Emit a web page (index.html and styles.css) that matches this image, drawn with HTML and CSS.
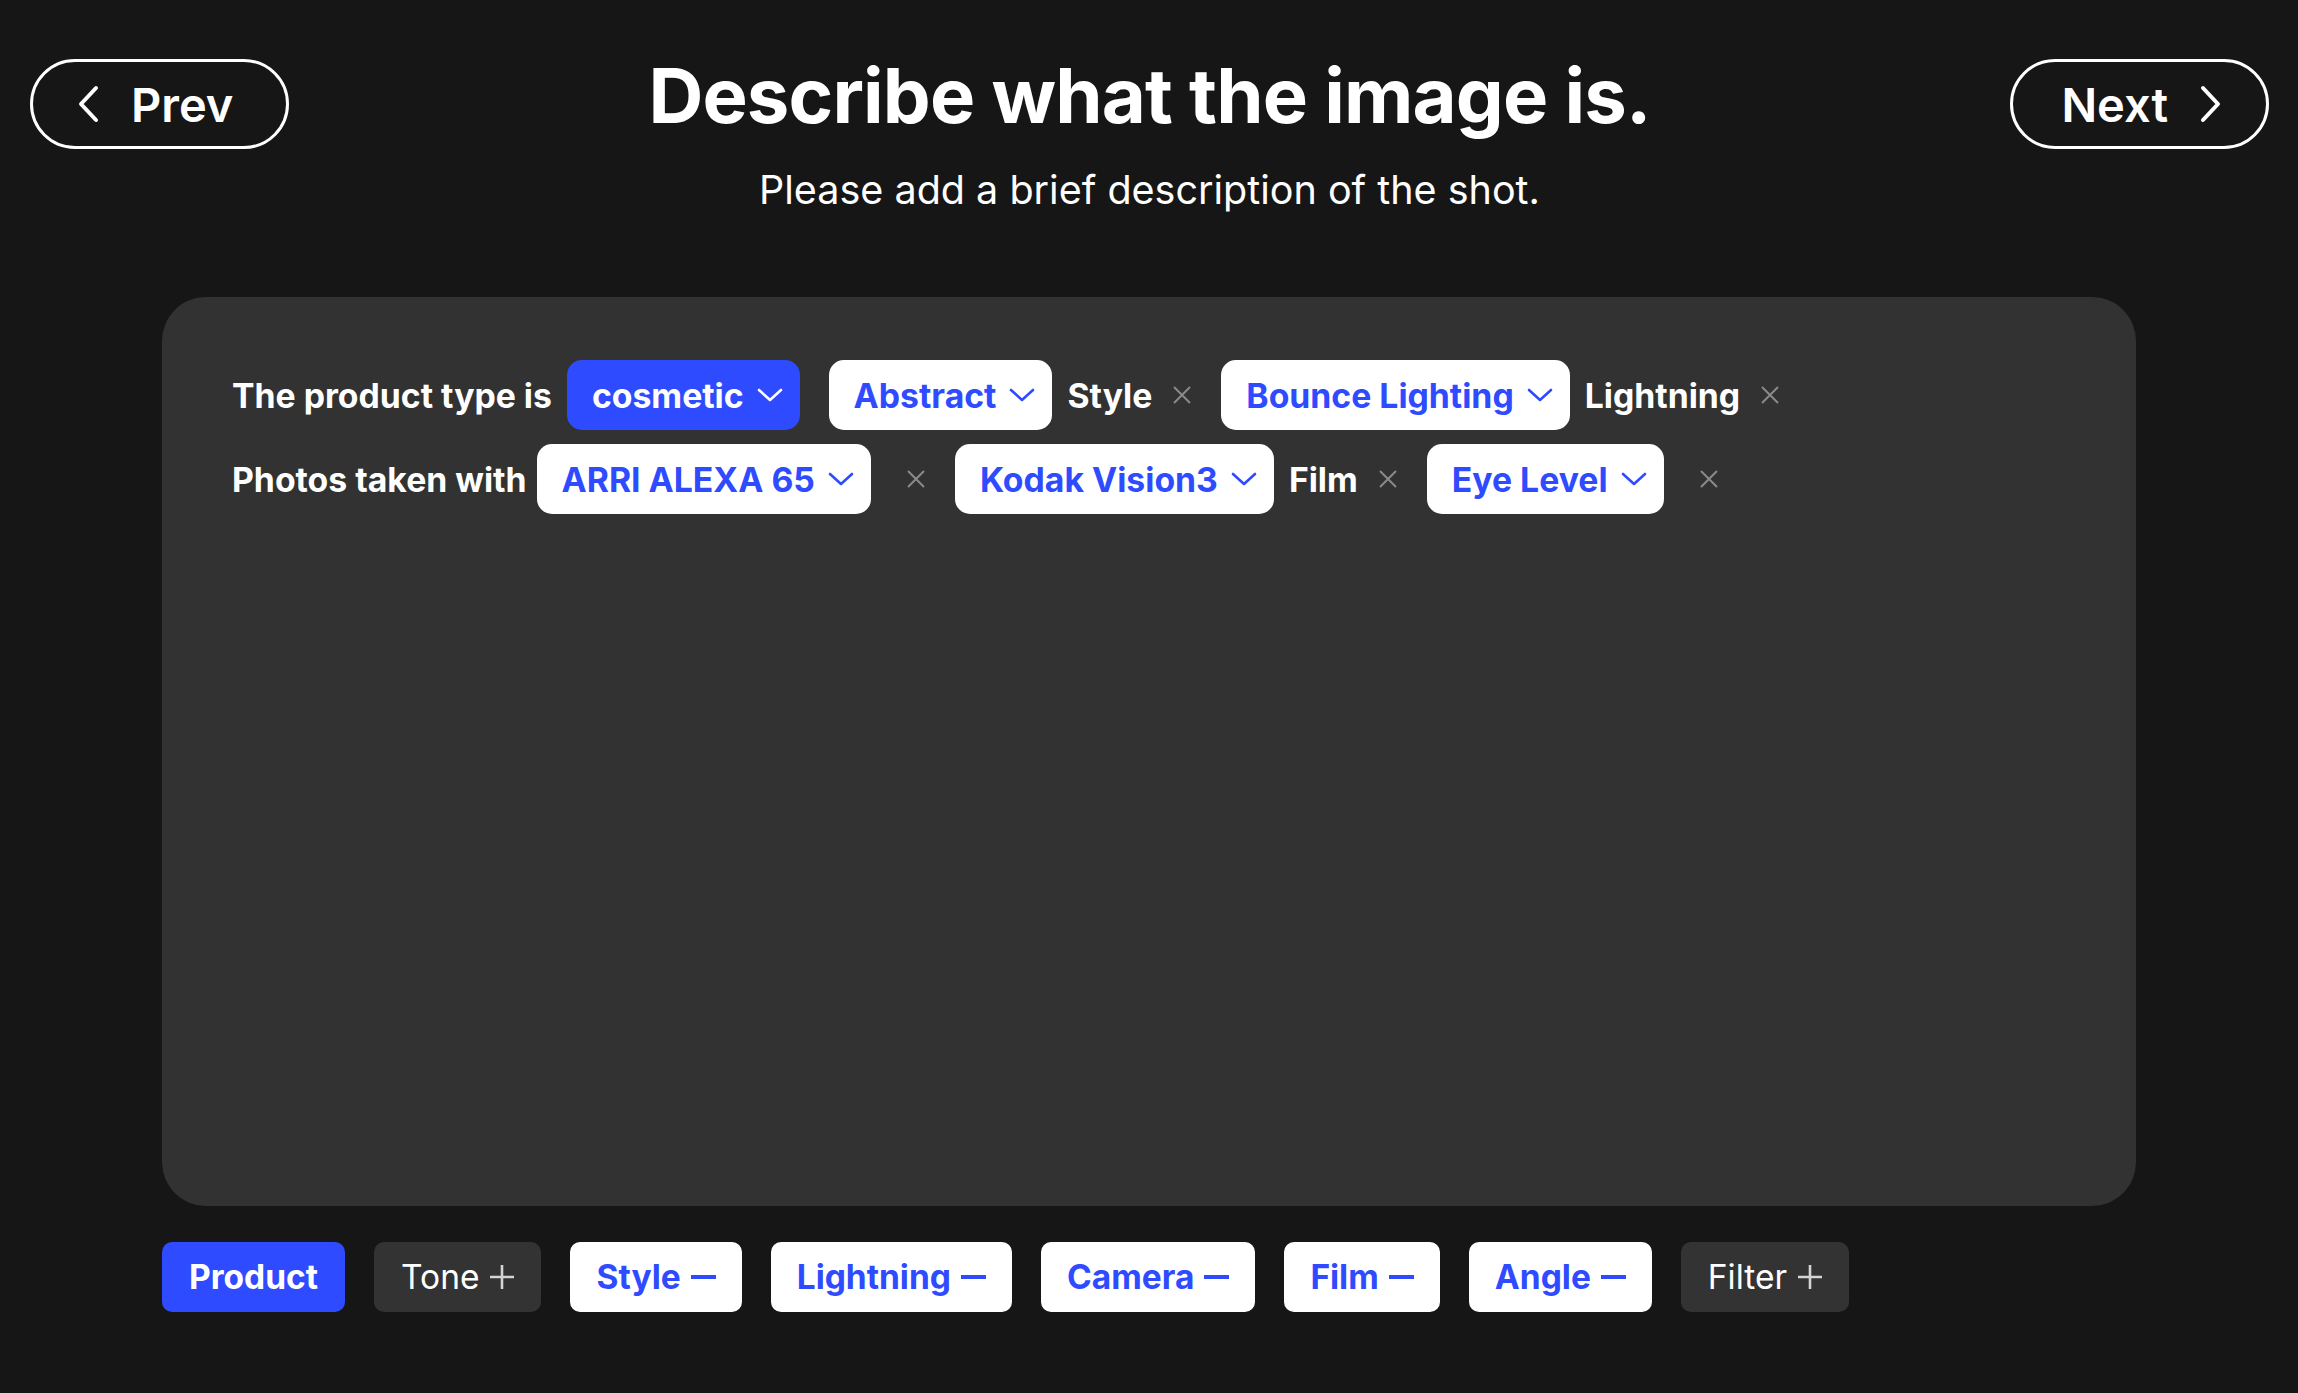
FILE: index.html
```html
<!DOCTYPE html>
<html lang="en">
<head>
    <meta charset="UTF-8">
    <meta name="viewport" content="width=device-width, initial-scale=1.0">
    <title>Describe the image</title>
    <link rel="stylesheet" href="styles.css">
</head>
<body>
    <div class="header">
        <button class="nav-btn nav-prev">
            <svg width="22" height="40" viewBox="0 0 22 40"><path d="M19 4 L4 20 L19 36" fill="none" stroke="#fff" stroke-width="4" stroke-linecap="round" stroke-linejoin="round"/></svg>
            <span>Prev</span>
        </button>

        <div class="heading">
            <h1>Describe what the image is.</h1>
            <p>Please add a brief description of the shot.</p>
        </div>

        <button class="nav-btn nav-next">
            <span>Next</span>
            <svg width="22" height="40" viewBox="0 0 22 40"><path d="M3 4 L18 20 L3 36" fill="none" stroke="#fff" stroke-width="4" stroke-linecap="round" stroke-linejoin="round"/></svg>
        </button>
    </div>

    <!-- Prompt builder -->
    <div class="panel">
        <div class="prompt">
            <div class="segment">
                <span class="label">The product type is</span>
                <button class="pick pick-active">cosmetic
                    <svg width="26" height="14" viewBox="0 0 26 14"><path d="M2 2 L13 12 L24 2" fill="none" stroke="currentColor" stroke-width="2.6" stroke-linecap="round" stroke-linejoin="round"/></svg>
                </button>
            </div>
            <div class="segment">
                <button class="pick">Abstract
                    <svg width="26" height="14" viewBox="0 0 26 14"><path d="M2 2 L13 12 L24 2" fill="none" stroke="currentColor" stroke-width="2.6" stroke-linecap="round" stroke-linejoin="round"/></svg>
                </button>
                <span class="label">Style</span>
                <span class="remove"><svg width="20" height="20" viewBox="0 0 20 20"><path d="M2 2 L18 18 M18 2 L2 18" stroke="#8a8a8a" stroke-width="2"/></svg></span>
            </div>
            <div class="segment">
                <button class="pick">Bounce Lighting
                    <svg width="26" height="14" viewBox="0 0 26 14"><path d="M2 2 L13 12 L24 2" fill="none" stroke="currentColor" stroke-width="2.6" stroke-linecap="round" stroke-linejoin="round"/></svg>
                </button>
                <span class="label">Lightning</span>
                <span class="remove"><svg width="20" height="20" viewBox="0 0 20 20"><path d="M2 2 L18 18 M18 2 L2 18" stroke="#8a8a8a" stroke-width="2"/></svg></span>
            </div>
        </div>

        <div class="prompt">
            <div class="segment segment-tight">
                <span class="label">Photos taken with</span>
                <button class="pick">ARRI ALEXA 65
                    <svg width="26" height="14" viewBox="0 0 26 14"><path d="M2 2 L13 12 L24 2" fill="none" stroke="currentColor" stroke-width="2.6" stroke-linecap="round" stroke-linejoin="round"/></svg>
                </button>
            </div>
            <div class="segment segment-joined">
                <span class="label"></span>
                <span class="remove"><svg width="20" height="20" viewBox="0 0 20 20"><path d="M2 2 L18 18 M18 2 L2 18" stroke="#8a8a8a" stroke-width="2"/></svg></span>
            </div>
            <div class="segment">
                <button class="pick">Kodak Vision3
                    <svg width="26" height="14" viewBox="0 0 26 14"><path d="M2 2 L13 12 L24 2" fill="none" stroke="currentColor" stroke-width="2.6" stroke-linecap="round" stroke-linejoin="round"/></svg>
                </button>
                <span class="label">Film</span>
                <span class="remove"><svg width="20" height="20" viewBox="0 0 20 20"><path d="M2 2 L18 18 M18 2 L2 18" stroke="#8a8a8a" stroke-width="2"/></svg></span>
            </div>
            <div class="segment">
                <button class="pick">Eye Level
                    <svg width="26" height="14" viewBox="0 0 26 14"><path d="M2 2 L13 12 L24 2" fill="none" stroke="currentColor" stroke-width="2.6" stroke-linecap="round" stroke-linejoin="round"/></svg>
                </button>
                <span class="label"></span>
                <span class="remove"><svg width="20" height="20" viewBox="0 0 20 20"><path d="M2 2 L18 18 M18 2 L2 18" stroke="#8a8a8a" stroke-width="2"/></svg></span>
            </div>
        </div>
    </div>

    <!-- Category toggles -->
    <div class="toolbar">
        <button class="tag tag-active">Product</button>
        <button class="tag tag-off">Tone
            <svg width="26" height="26" viewBox="0 0 26 26"><path d="M13 1 V25 M1 13 H25" stroke="#d4d4d4" stroke-width="2.6"/></svg>
        </button>
        <button class="tag">Style <span class="minus"></span></button>
        <button class="tag">Lightning <span class="minus"></span></button>
        <button class="tag">Camera <span class="minus"></span></button>
        <button class="tag">Film <span class="minus"></span></button>
        <button class="tag">Angle <span class="minus"></span></button>
        <button class="tag tag-off">Filter
            <svg width="26" height="26" viewBox="0 0 26 26"><path d="M13 1 V25 M1 13 H25" stroke="#d4d4d4" stroke-width="2.6"/></svg>
        </button>
    </div>
</body>
</html>
```

FILE: styles.css
```css
body {
    margin: 0;
    height: 100vh;
    background: #161616;
    color: #fff;
    font-family: Inter, "Noto Sans", sans-serif;
    overflow: hidden;
}

button {
    font-family: inherit;
    border: none;
    cursor: pointer;
}

/* Header */
.header {
    display: grid;
    grid-template-columns: 259px 1fr 259px;
    align-items: start;
    padding: 49px 29px 0 30px;
}

.nav-btn {
    margin-top: 10px;
    height: 90px;
    width: 259px;
    box-sizing: border-box;
    border: 3px solid #fff;
    border-radius: 45px;
    background: transparent;
    color: #fff;
    font-size: 47px;
    font-weight: 600;
    display: flex;
    align-items: center;
    gap: 32px;
}

.nav-prev {
    padding-left: 44px;
}

.nav-next {
    justify-content: flex-end;
    padding-right: 44px;
}

.heading {
    text-align: center;
}

.heading h1 {
    margin: 0;
    font-size: 76px;
    line-height: 92px;
    font-weight: 700;
    letter-spacing: -0.85px;
}

.heading p {
    margin: 26px 0 0;
    font-size: 39.5px;
    line-height: 46px;
}

/* Panel */
.panel {
    width: 1974px;
    height: 909px;
    box-sizing: border-box;
    margin: 84px auto 0;
    background: #323232;
    border-radius: 44px;
    padding: 63px 70px;
}

.prompt {
    display: flex;
    flex-wrap: wrap;
    align-items: center;
    column-gap: 29px;
    margin-bottom: 14px;
}

.segment {
    display: flex;
    align-items: center;
    gap: 15px;
}

.segment-tight {
    gap: 10px;
}

.segment-joined {
    margin-left: -14px;
}

.label {
    font-size: 33.75px;
    font-weight: 700;
}

.remove {
    display: flex;
    margin-left: 5px;
}

.pick {
    height: 70px;
    padding: 0 17px 0 25px;
    border-radius: 15px;
    background: #fff;
    color: #2f4bff;
    font-size: 33.75px;
    font-weight: 700;
    display: flex;
    align-items: center;
    gap: 13px;
}

.pick-active {
    background: #2f4bff;
    color: #fff;
}

/* Toolbar */
.toolbar {
    width: 1974px;
    margin: 36px auto 0;
    display: flex;
    gap: 29px;
}

.tag {
    height: 70px;
    padding: 0 26px;
    border-radius: 10px;
    background: #fff;
    color: #2f4bff;
    font-size: 33.5px;
    font-weight: 700;
    display: flex;
    align-items: center;
    gap: 10px;
}

.tag-active {
    background: #2f4bff;
    color: #fff;
    padding: 0 27px;
}

.tag-off {
    background: #333;
    color: #fff;
    font-weight: 400;
    padding: 0 26px 0 27px;
}

.minus {
    width: 25px;
    height: 3.5px;
    background: #2f4bff;
}
```
